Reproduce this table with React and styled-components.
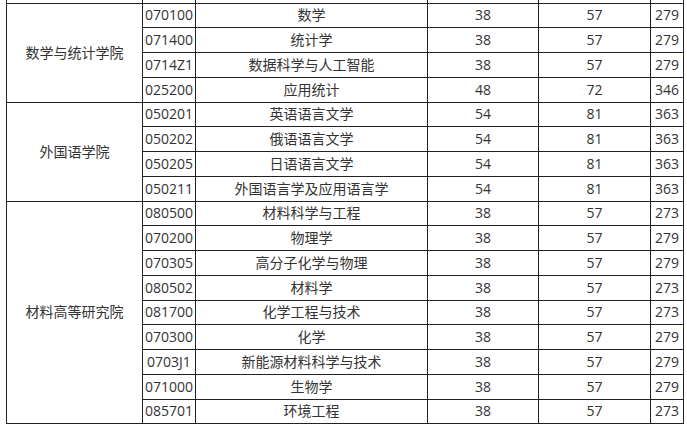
import React from "react";
import styled, { createGlobalStyle } from "styled-components";

const Global = createGlobalStyle`
  html, body { margin: 0; padding: 0; background: #fff; }
  body { font-family: "Open Sans", "Noto Sans CJK SC", sans-serif; }
`;

const Page = styled.div`
  width: 687px;
  height: 429px;
  overflow: hidden;
  padding-left: 6px;
  box-sizing: border-box;
  background: #fff;
`;

const Table = styled.table`
  border-collapse: collapse;
  table-layout: fixed;
  width: 677px;
  font-size: 14px;
  color: #333;
`;

const Cell = styled.td`
  border: 1px solid #222;
  padding: 0;
  height: 23.75px;
  text-align: center;
  vertical-align: middle;
  line-height: 18px;
  white-space: nowrap;
  overflow: hidden;
`;

const SpacerCell = styled.td`
  border-left: 1px solid #222;
  border-right: 1px solid #222;
  border-top: none;
  padding: 0;
  height: 2.5px;
  font-size: 0;
  line-height: 0;
`;

const groups = [
  {
    college: "数学与统计学院",
    rows: [
      ["070100", "数学", 38, 57, 279],
      ["071400", "统计学", 38, 57, 279],
      ["0714Z1", "数据科学与人工智能", 38, 57, 279],
      ["025200", "应用统计", 48, 72, 346],
    ],
  },
  {
    college: "外国语学院",
    rows: [
      ["050201", "英语语言文学", 54, 81, 363],
      ["050202", "俄语语言文学", 54, 81, 363],
      ["050205", "日语语言文学", 54, 81, 363],
      ["050211", "外国语言学及应用语言学", 54, 81, 363],
    ],
  },
  {
    college: "材料高等研究院",
    rows: [
      ["080500", "材料科学与工程", 38, 57, 273],
      ["070200", "物理学", 38, 57, 279],
      ["070305", "高分子化学与物理", 38, 57, 279],
      ["080502", "材料学", 38, 57, 273],
      ["081700", "化学工程与技术", 38, 57, 273],
      ["070300", "化学", 38, 57, 279],
      ["0703J1", "新能源材料科学与技术", 38, 57, 279],
      ["071000", "生物学", 38, 57, 279],
      ["085701", "环境工程", 38, 57, 273],
    ],
  },
];

const widths = [136, 53, 232, 111, 112, 33];

export default function App() {
  return (
    <>
      <Global />
      <Page>
        <Table>
          <colgroup>
            {widths.map((w, i) => (
              <col key={i} style={{ width: w }} />
            ))}
          </colgroup>
          <tbody>
            <tr>
              {widths.map((_, i) => (
                <SpacerCell key={i} />
              ))}
            </tr>
            {groups.map((g) =>
              g.rows.map((r, i) => (
                <tr key={r[0]}>
                  {i === 0 && <Cell rowSpan={g.rows.length}>{g.college}</Cell>}
                  {r.map((v, j) => (
                    <Cell key={j}>{v}</Cell>
                  ))}
                </tr>
              ))
            )}
          </tbody>
        </Table>
      </Page>
    </>
  );
}
